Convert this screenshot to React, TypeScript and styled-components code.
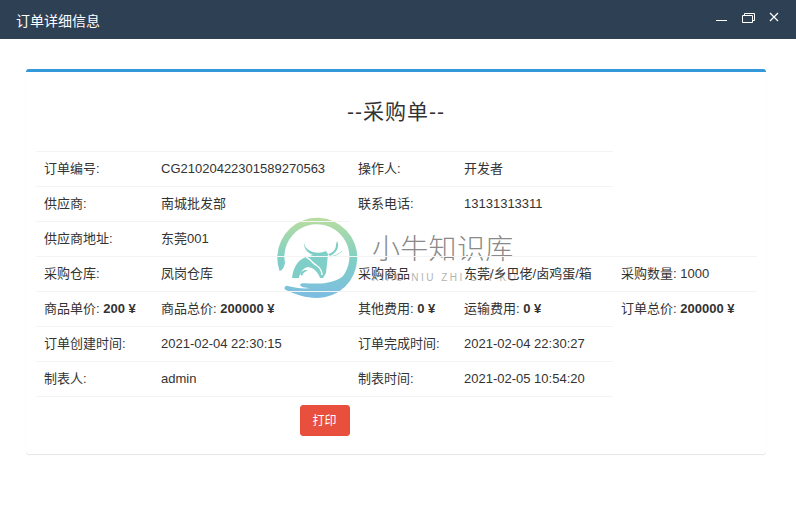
import React from 'react';
import styled, { createGlobalStyle } from 'styled-components';

const GlobalStyle = createGlobalStyle`
  html, body {
    margin: 0;
    padding: 0;
    background: #fff;
  }
  body {
    font-family: "Liberation Sans", "Noto Sans CJK SC", sans-serif;
    font-size: 13px;
    color: #333;
  }
`;

const Page = styled.div`
  position: relative;
  width: 796px;
  height: 517px;
  overflow: hidden;
`;

const TitleBar = styled.header`
  height: 39px;
  background: #2e4054;
  color: #fff;
  display: flex;
  align-items: center;
  justify-content: space-between;
  padding: 0 16px;
  font-size: 14px;
`;

const WindowButtons = styled.div`
  display: flex;
  align-items: center;
  gap: 12px;
  margin-right: -1px;
`;

const WindowIcon = styled.svg`
  display: block;
  width: 14px;
  height: 15px;
  fill: none;
  stroke: #fff;
  stroke-width: 1;
`;

const Content = styled.main`
  padding: 30px 30px 0 26px;
`;

const Box = styled.section`
  height: 385px;
  box-sizing: border-box;
  background: #fff;
  border-top: 3px solid #3498db;
  border-radius: 3px;
  box-shadow: 0 1px 1px rgba(0, 0, 0, 0.1);
  padding: 0 10px;
`;

const Heading = styled.h2`
  margin: 0;
  height: 79px;
  line-height: 80px;
  text-align: center;
  font-size: 21px;
  font-weight: 400;
  letter-spacing: 1px;
`;

const OrderTable = styled.table`
  position: relative;
  z-index: 1;
  width: 721px;
  table-layout: fixed;
  border-collapse: collapse;
`;

const Cell = styled.td`
  height: 18px;
  padding: 8px;
  line-height: 18px;
  border-top: 1px solid #f4f4f4;
  white-space: nowrap;
  overflow: visible;
  vertical-align: top;
`;

const ClosingCell = styled.td`
  height: 0;
  padding: 0;
  border-top: 1px solid #f4f4f4;
`;

const ButtonRow = styled.div`
  width: 577px;
  display: flex;
  justify-content: center;
  padding-top: 8px;
`;

const PrintButton = styled.button`
  width: 50px;
  height: 31px;
  border: 1px solid #e74c3c;
  border-radius: 3px;
  background: #e94f3d;
  color: #fff;
  font-family: inherit;
  font-size: 12px;
  padding: 0 0 2px;
`;

const Watermark = styled.div`
  position: absolute;
  left: 270px;
  top: 210px;
  display: flex;
`;

const WatermarkLogo = styled.svg`
  display: block;
  width: 100px;
  height: 100px;
`;

const WatermarkText = styled.div`
  margin-left: 2px;
  padding-top: 23px;
`;

const WatermarkName = styled.div`
  font-size: 28px;
  line-height: 34px;
  letter-spacing: 0.3px;
  color: #8a8a8a;
  font-weight: 300;
`;

const WatermarkPinyin = styled.div`
  margin-top: 5px;
  font-size: 10px;
  line-height: 12px;
  letter-spacing: 2.5px;
  color: #b4b4b4;
  white-space: nowrap;
`;

const rows: React.ReactNode[][] = [
  ['订单编号:', 'CG21020422301589270563', '操作人:', '开发者'],
  ['供应商:', '南城批发部', '联系电话:', '13131313311'],
  ['供应商地址:', '东莞001'],
  ['采购仓库:', '凤岗仓库', '采购商品', '东莞/乡巴佬/卤鸡蛋/箱', '采购数量: 1000'],
  [
    <>商品单价: <b>200 ¥</b></>,
    <>商品总价: <b>200000 ¥</b></>,
    <>其他费用: <b>0 ¥</b></>,
    <>运输费用: <b>0 ¥</b></>,
    <>订单总价: <b>200000 ¥</b></>,
  ],
  ['订单创建时间:', '2021-02-04 22:30:15', '订单完成时间:', '2021-02-04 22:30:27'],
  ['制表人:', 'admin', '制表时间:', '2021-02-05 10:54:20'],
];

const Logo = () => (
  <WatermarkLogo viewBox="0 0 100 100">
    <defs>
      <linearGradient id="ring" x1="0" y1="0" x2="0" y2="1">
        <stop offset="0" stopColor="#b9dd9f" />
        <stop offset="0.5" stopColor="#80d0c4" />
        <stop offset="1" stopColor="#7dbde2" />
      </linearGradient>
    </defs>
    {/* ring and open hand */}
    <path
      fill="url(#ring)"
      d="M9.5 61A40 40 0 1 1 62 85C47 91 31 87 16 80C13 79 15 75 18 76C26 78 33 79 41 78C35 78 30 77 30 74.5C31 72.5 36 73.5 43 73.5C55 74 66 72 73 66A32.5 32.5 0 1 0 15 53C14 57 13 60 9.5 61Z"
    />
    {/* bull */}
    <path
      fill="#7fcfc8"
      d="M35 31C33 36 37 40 43 42C47 43 52 43 56 41L58 44L56 63L53 68H50C48 62 44 58 38 57C33 58 30 62 29 68H22C23 59 27 50 36 47C38 46 41 46 43 45C38 43 32 38 35 31Z"
    />
    <path fill="none" stroke="#fff" strokeWidth="1.4" d="M36 47C41 49 42 53 46 55C49 57 52 60 52 65" />
    <path fill="#7fcfc8" d="M30 64C32 60 36 59 38 61C35 61 33 63 32 66Z" />
    <path fill="#7fcfc8" d="M58 44C63 43 66 39 66 35C66 33 67 32 67 31C70 36 67 43 60 46Z" />
    <path fill="none" stroke="#a6dcc8" strokeWidth="1" d="M60 47C65 46 69 44 72 41" />
  </WatermarkLogo>
);

const App = () => (
  <Page>
    <GlobalStyle />
    <TitleBar>
      <span>订单详细信息</span>
      <WindowButtons>
        <WindowIcon viewBox="0 0 14 15">
          <path d="M1 8.5H12" />
        </WindowIcon>
        <WindowIcon viewBox="0 0 14 15">
          <path d="M1.5 3.5H11.5V10.5H1.5ZM3.5 3.5V1.5H13.5V8.5H11.5" />
        </WindowIcon>
        <WindowIcon viewBox="0 0 14 15">
          <path strokeWidth="1.2" d="M3 1L11 9M11 1L3 9" />
        </WindowIcon>
      </WindowButtons>
    </TitleBar>
    <Content>
      <Box>
        <Heading>--采购单--</Heading>
        <OrderTable>
          <colgroup>
            <col width="117" />
            <col width="197" />
            <col width="106" />
            <col width="157" />
            <col width="144" />
          </colgroup>
          <tbody>
            {rows.map((row, i) => (
              <tr key={i}>
                {row.map((value, j) => (
                  <Cell key={j}>{value}</Cell>
                ))}
              </tr>
            ))}
            <tr>
              <ClosingCell colSpan={4} />
            </tr>
          </tbody>
        </OrderTable>
        <ButtonRow>
          <PrintButton type="button">打印</PrintButton>
        </ButtonRow>
      </Box>
    </Content>
    <Watermark>
      <Logo />
      <WatermarkText>
        <WatermarkName>小牛知识库</WatermarkName>
        <WatermarkPinyin>XIAO NIU ZHI SHI KU</WatermarkPinyin>
      </WatermarkText>
    </Watermark>
  </Page>
);

export default App;
